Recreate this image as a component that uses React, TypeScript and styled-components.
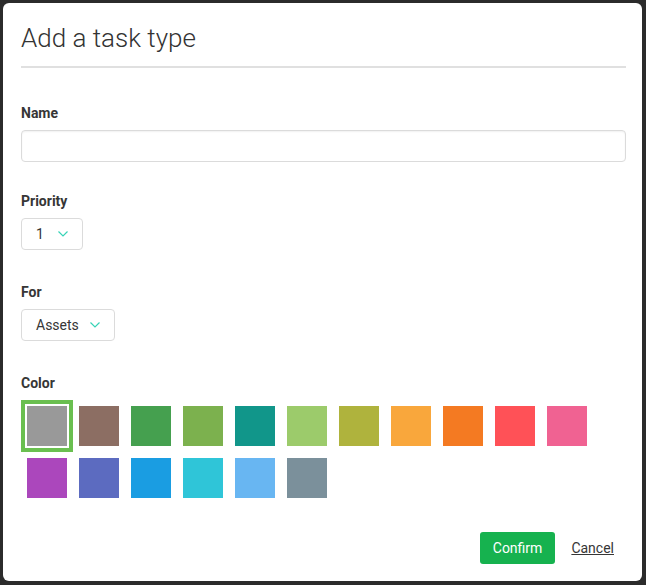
import React from "react";
import styled, { createGlobalStyle } from "styled-components";

const Global = createGlobalStyle`
  html, body { margin: 0; padding: 0; }
  body {
    background: #2b2b2b;
    font-family: Roboto, "Liberation Sans", sans-serif;
    color: #363636;
  }
`;

const Modal = styled.div`
  box-sizing: border-box;
  margin: 3px;
  width: 639px;
  height: 578px;
  background: #fff;
  border-radius: 6px;
  padding: 0 16px 0 18px;
  display: flex;
  flex-direction: column;
`;

const Title = styled.h1`
  margin: 0;
  padding: 20px 0 12px;
  font-size: 26px;
  font-weight: 300;
  line-height: 31px;
  color: #333;
  border-bottom: 2px solid #e0e0e0;
`;

const Field = styled.div<{ $top: number }>`
  margin-top: ${(p) => p.$top}px;
  display: flex;
  flex-direction: column;
  align-items: flex-start;
`;

const Label = styled.label`
  font-size: 14px;
  font-weight: 700;
  line-height: 17px;
  color: #363636;
  margin-bottom: 8px;
`;

const TextInput = styled.input`
  box-sizing: border-box;
  width: 100%;
  height: 32px;
  border: 1px solid #dbdbdb;
  border-radius: 4px;
  box-shadow: inset 0 1px 2px rgba(10, 10, 10, 0.06);
  outline: none;
  font: inherit;
  padding: 0 10px;
`;

const Select = styled.div<{ $width: number }>`
  box-sizing: border-box;
  width: ${(p) => p.$width}px;
  height: 32px;
  border: 1px solid #dbdbdb;
  border-radius: 4px;
  padding: 0 14px;
  display: flex;
  align-items: center;
  justify-content: space-between;
  font-size: 14px;
  color: #363636;
`;

const Chevron = styled.svg`
  width: 10px;
  height: 6px;
  flex: none;
`;

const Swatches = styled.div`
  display: flex;
  flex-wrap: wrap;
  width: 100%;
`;

const Swatch = styled.div<{ $color: string; $selected?: boolean }>`
  box-sizing: border-box;
  width: 52px;
  height: 52px;
  padding: 6px;
  ${(p) => (p.$selected ? "border: 4px solid #6abf50; padding: 2px;" : "")}
  &::after {
    content: "";
    display: block;
    width: 40px;
    height: 40px;
    background: ${(p) => p.$color};
  }
`;

const Footer = styled.div`
  margin-top: 28px;
  display: flex;
  justify-content: flex-end;
  align-items: center;
  gap: 16px;
  padding-right: 12px;
`;

const ConfirmButton = styled.button`
  height: 32px;
  padding: 0 13px;
  border: none;
  border-radius: 3px;
  background: #16b24f;
  color: #fff;
  font-family: inherit;
  font-size: 14px;
`;

const CancelLink = styled.a`
  font-size: 14px;
  color: #363636;
  text-decoration: underline;
  cursor: pointer;
`;

const colors = [
  "#999999",
  "#8c6e63",
  "#45a04f",
  "#7cb14e",
  "#11968a",
  "#9ccb6b",
  "#afb33d",
  "#f9a73c",
  "#f47a22",
  "#ff5157",
  "#f06292",
  "#ab47bc",
  "#5c6bc0",
  "#1a9de2",
  "#2fc5d8",
  "#68b6f2",
  "#7b909b",
];

const ChevronIcon = () => (
  <Chevron viewBox="0 0 10 6">
    <polyline points="0.5,0.5 5,5 9.5,0.5" fill="none" stroke="#38d3b6" strokeWidth="1.2" />
  </Chevron>
);

export default function App() {
  return (
    <>
      <Global />
      <Modal>
        <Title>Add a task type</Title>
        <Field $top={37}>
          <Label>Name</Label>
          <TextInput type="text" />
        </Field>
        <Field $top={31}>
          <Label>Priority</Label>
          <Select $width={62}>
            <span>1</span>
            <ChevronIcon />
          </Select>
        </Field>
        <Field $top={34}>
          <Label>For</Label>
          <Select $width={94}>
            <span>Assets</span>
            <ChevronIcon />
          </Select>
        </Field>
        <Field $top={34}>
          <Label>Color</Label>
          <Swatches>
            {colors.map((c, i) => (
              <Swatch key={c} $color={c} $selected={i === 0} />
            ))}
          </Swatches>
        </Field>
        <Footer>
          <ConfirmButton>Confirm</ConfirmButton>
          <CancelLink>Cancel</CancelLink>
        </Footer>
      </Modal>
    </>
  );
}
